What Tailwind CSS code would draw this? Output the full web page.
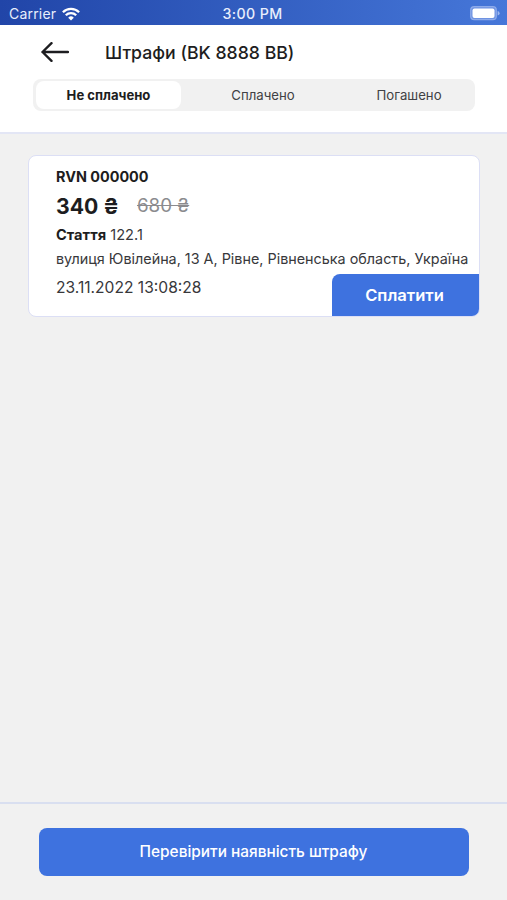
<!DOCTYPE html>
<html lang="uk">
    <head>
        <meta charset="UTF-8" />
        <meta name="viewport" content="width=device-width, initial-scale=1.0" />
        <title>Штрафи</title>
        <script src="https://cdn.jsdelivr.net/npm/@tailwindcss/browser@4"></script>
        <style>
            body {
                font-family: "Inter", sans-serif;
            }
        </style>
    </head>
    <body class="flex flex-col h-screen overflow-hidden bg-[#f1f1f1] text-[#1d1d20]">
        <!-- Status bar -->
        <div class="grid grid-cols-3 items-center h-[25px] pt-[2px] pl-[9px] pr-[7px] shrink-0 bg-linear-to-r from-[#2145a8] to-[#4677d9] text-[#e8eefc]">
            <div class="flex items-center gap-[6px]">
                <span class="text-[14px] leading-5 tracking-[0.2px]">Carrier</span>
                <svg class="w-[18px] h-[14px]" viewBox="0 0 18 14" fill="none" stroke="#fff" stroke-width="2.3">
                    <path d="M0.9 5.2a11.6 11.6 0 0 1 16.2 0" />
                    <path d="M3.8 8.3a7.4 7.4 0 0 1 10.4 0" />
                    <path d="M9 13.5L6.2 10.7a4 4 0 0 1 5.6 0z" fill="#fff" stroke="none" />
                </svg>
            </div>
            <span class="pr-[4px] text-center text-[14.2px] leading-5 font-medium tracking-[0.4px]">3:00 PM</span>
            <svg class="w-[30px] h-[15px] justify-self-end" viewBox="0 0 30 15">
                <rect x="0.7" y="0.7" width="25.6" height="13" rx="3.5" fill="#6f93e2" stroke="#8eabea" stroke-width="1.2" />
                <rect x="2.5" y="2.5" width="22" height="9.4" rx="2" fill="#fff" />
                <path d="M27.6 5v4.6q2-.6 2-2.3t-2-2.3z" fill="#9db7ef" />
            </svg>
        </div>

        <!-- Header with tabs -->
        <header class="h-[109px] shrink-0 bg-white border-b-2 border-[#e3e6f5]">
            <div class="flex items-center h-[54px] pl-[41px]">
                <svg class="w-7 h-5" viewBox="0 0 28 20" fill="none" stroke="#1d1d20" stroke-width="2.4" stroke-linecap="round" stroke-linejoin="round">
                    <path d="M27 10H1.5M10.5 1.2L1.5 10l9 8.8" />
                </svg>
                <h1 class="ml-9 pt-[2px] text-[17.7px] font-medium">Штрафи (BK 8888 BB)</h1>
            </div>
            <div class="grid grid-cols-[146px_162px_1fr] items-center h-8 ml-[33px] mr-8 p-[2px] rounded-lg bg-[#f1f1f1] text-[13.2px] text-[#414144] text-center">
                <span class="flex items-center justify-center h-7 ml-px pt-px rounded-lg bg-white text-[13.1px] font-bold text-[#1d1d20]">Не сплачено</span>
                <span class="pt-px pl-[2px]">Сплачено</span>
                <span class="pt-px pl-[2px]">Погашено</span>
            </div>
        </header>

        <!-- Fine card -->
        <main class="flex-1 pt-[21px] pl-7 pr-[27px]">
            <article class="relative h-[162px] pl-[27px] pt-[10px] border border-[#dcdff5] rounded-lg bg-white overflow-hidden whitespace-nowrap">
                <p class="text-[14.4px] leading-[22px] font-bold">RVN 000000</p>
                <p class="flex items-center h-9">
                    <span class="pt-px text-[21.2px] font-bold">340 ₴</span>
                    <span class="ml-[18px] text-[18.8px] text-[#8b8b8e] line-through">680 ₴</span>
                </p>
                <p class="text-[14.6px] leading-[22px] text-[#38383b]"><b class="font-bold text-[#1d1d20]">Стаття</b> 122.1</p>
                <p class="text-[14.37px] leading-[26px] text-[#38383b]">вулиця Ювілейна, 13 А, Рівне, Рівненська область, Україна</p>
                <p class="mt-1 text-[15.6px] leading-6 text-[#38383b]">23.11.2022 13:08:28</p>
                <button class="absolute right-0 bottom-0 w-[147px] h-[42px] pr-[2px] rounded-tl-lg bg-[#3e72df] text-white text-[16.6px] font-semibold">Сплатити</button>
            </article>
        </main>

        <!-- Bottom action -->
        <footer class="h-[98px] shrink-0 pt-6 pl-[39px] pr-[38px] border-t-2 border-[#d9dff0]">
            <button class="w-full h-12 pr-px rounded-lg bg-[#3e72df] text-white text-[15.4px] font-medium">Перевірити наявність штрафу</button>
        </footer>
    </body>
</html>
